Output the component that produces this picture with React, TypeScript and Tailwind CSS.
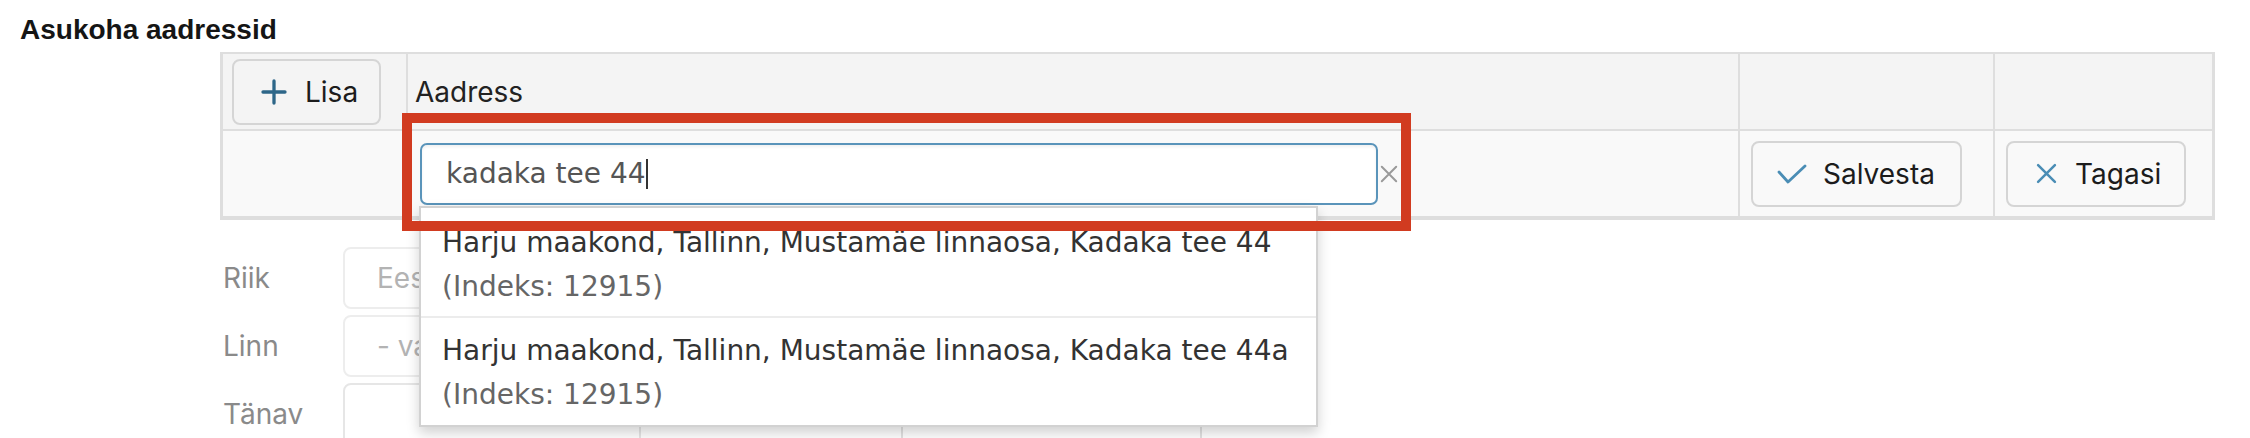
import React from 'react';

const PlusIcon: React.FC = () => (
  <svg width="26" height="26" viewBox="0 0 26 26" fill="none" stroke="#2d6688" strokeWidth="3.3" strokeLinecap="round">
    <path d="M13 2v22M2 13h22" />
  </svg>
);

const CheckIcon: React.FC = () => (
  <svg width="30" height="20" viewBox="0 0 30 20" fill="none" stroke="#4a8db5" strokeWidth="2.8" strokeLinecap="round" strokeLinejoin="round">
    <path d="M2 8l9 10L28 2" />
  </svg>
);

const CrossIcon: React.FC<{ color: string; size: number; stroke: number }> = ({ color, size, stroke }) => (
  <svg width={size} height={size} viewBox="0 0 20 20" fill="none" stroke={color} strokeWidth={stroke} strokeLinecap="round">
    <path d="M2 2l16 16M18 2L2 18" />
  </svg>
);

const suggestions = [
  'Harju maakond, Tallinn, Mustamäe linnaosa, Kadaka tee 44',
  'Harju maakond, Tallinn, Mustamäe linnaosa, Kadaka tee 44a',
];

const App: React.FC = () => {
  return (
    <div className="relative w-[2250px] h-[438px] overflow-hidden bg-white text-[#222]">
      {/* Section title */}
      <div className="pl-[20px] pt-[14px]">
        <h2 className="[font-family:'Liberation_Sans',Arial,sans-serif] font-bold text-[28px] leading-[32px] text-[#151515]">
          Asukoha aadressid
        </h2>
      </div>

      {/* Address table */}
      <div className="[font-family:Inter,sans-serif] ml-[220px] mt-[6px] w-[1995px] border-x-[3px] border-t-2 border-b-4 border-[#dedede]">
        <div className="flex h-[75px] bg-[#f4f4f4] text-[28px] leading-[40px]">
          <div className="w-[183px] flex items-center pl-[9px]">
            <button className="flex items-center w-[149px] h-[66px] pl-[27px] gap-[18px] rounded-[8px] border-2 border-[#d5d5d5] bg-[#f4f4f4] text-[#1c1c1c]">
              <PlusIcon />
              <span>Lisa</span>
            </button>
          </div>
          <div className="w-[1332px] border-l-2 border-[#dedede] flex items-center pl-[7px]">Aadress</div>
          <div className="w-[255px] border-l-2 border-[#dedede]" />
          <div className="w-[219px] border-l-2 border-[#dedede]" />
        </div>

        <div className="flex h-[87px] bg-[#f9f9f9] border-t-2 border-[#dedede] text-[28px] leading-[40px]">
          <div className="w-[183px]" />
          <div className="w-[1332px] border-l-2 border-[#dedede] flex items-center pl-[12px]">
            <div className="[font-family:'DejaVu_Sans',Verdana,sans-serif] flex items-center w-[958px] h-[62px] rounded-[7px] border-2 border-[#5a94ba] bg-white pl-[24px] shadow-[inset_0_2px_3px_rgba(0,0,0,0.06)] text-[28px] text-[#555]">
              <span>kadaka tee 44</span>
              <span className="inline-block w-[2px] h-[30px] bg-[#333]" />
            </div>
            <span className="ml-[2px] flex items-center">
              <CrossIcon color="#9a9a9a" size={18} stroke={2.2} />
            </span>
          </div>
          <div className="w-[255px] border-l-2 border-[#dedede] flex items-center pl-[11px]">
            <button className="flex items-center w-[211px] h-[66px] pl-[24px] gap-[16px] rounded-[8px] border-2 border-[#d5d5d5] bg-[#f9f9f9] text-[#1c1c1c]">
              <CheckIcon />
              <span>Salvesta</span>
            </button>
          </div>
          <div className="w-[219px] border-l-2 border-[#dedede] flex items-center pl-[11px]">
            <button className="flex items-center w-[180px] h-[66px] pl-[28px] gap-[18px] rounded-[8px] border-2 border-[#d5d5d5] bg-[#f9f9f9] text-[#1c1c1c]">
              <CrossIcon color="#4a8db5" size={21} stroke={2.4} />
              <span>Tagasi</span>
            </button>
          </div>
        </div>
      </div>

      {/* Address form behind the dropdown */}
      <div className="[font-family:Inter,sans-serif] mt-[27px] pl-[223px] flex flex-col gap-[6px] text-[28px] leading-[40px]">
        <div className="flex items-center">
          <span className="w-[120px] text-[#8a8a8a]">Riik</span>
          <div className="w-[560px] h-[62px] rounded-[8px] border-2 border-[#ededed] flex items-center pl-[32px] text-[#b3b3b3]">Eesti</div>
        </div>
        <div className="flex items-center">
          <span className="w-[120px] text-[#8a8a8a]">Linn</span>
          <div className="w-[560px] h-[62px] rounded-[8px] border-2 border-[#ededed] flex items-center pl-[32px] text-[#b3b3b3]">- vali -</div>
        </div>
        <div className="flex items-start">
          <span className="w-[120px] pt-[11px] text-[#8a8a8a]">Tänav</span>
          <div className="w-[298px] h-[70px] rounded-l-[8px] border-2 border-[#e6e6e6]" />
          <div className="w-[262px] h-[70px] border-y-2 border-r-2 border-[#e2e2e2]" />
          <div className="w-[299px] h-[70px] border-y-2 border-r-2 border-[#e2e2e2]" />
        </div>
      </div>

      {/* Autocomplete dropdown */}
      <div className="[font-family:'DejaVu_Sans',Verdana,sans-serif] absolute left-[419px] top-[206px] w-[899px] h-[221px] bg-white border-2 border-[#d2d2d2] shadow-[0_6px_12px_rgba(0,0,0,0.18)] pt-[3px] text-[28px] leading-[44px]">
        {suggestions.map((s, i) => (
          <div key={s} className={i === 0 ? 'pl-[21px] pt-[10px] pb-[7px]' : 'pl-[21px] pt-[11px] pb-[8px] border-t-2 border-[#ececec]'}>
            <div className="text-[#333]">{s}</div>
            <div className="text-[#666]">(Indeks: 12915)</div>
          </div>
        ))}
      </div>

      {/* Highlight annotation */}
      <div className="absolute left-[402px] top-[113px] w-[1009px] h-[118px] border-[10px] border-[#d13b20]" />
    </div>
  );
};

export default App;
